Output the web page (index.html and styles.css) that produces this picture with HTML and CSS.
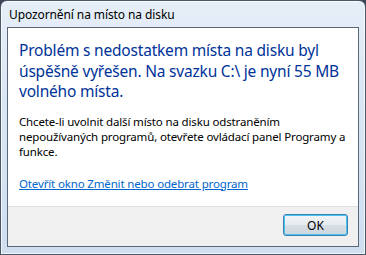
FILE: index.html
```html
<!DOCTYPE html>
<html>
	<head>
		<meta charset="utf-8">
		<link rel="stylesheet" href="styles.css">
	</head>
	<body>
		<div class="window">
			<div class="titlebar">Upozornění na místo na disku</div>
			<div class="client">
				<div class="content">
					<h1 class="instruction">Problém s nedostatkem místa na disku byl úspěšně vyřešen. Na svazku C:\ je nyní 55 MB volného místa.</h1>
					<p class="body-text">Chcete-li uvolnit další místo na disku odstraněním nepoužívaných programů, otevřete ovládací panel Programy a funkce.</p>
					<a class="link" href="#">Otevřít okno Změnit nebo odebrat program</a>
				</div>
				<div class="footer">
					<button class="ok">OK</button>
				</div>
			</div>
		</div>
	</body>
</html>
```
FILE: styles.css
```css
html, body {
	margin: 0;
	width: 366px;
	height: 255px;
	overflow: hidden;
	background: #3a4656;
	font-family: "Noto Sans", "Open Sans", sans-serif;
}

.window {
	box-sizing: border-box;
	width: 366px;
	height: 255px;
	border: 1px solid #4a5868;
	border-radius: 7px 7px 0 0;
	background: linear-gradient(to bottom, #e6eef8 0%, #d9e6f4 40%, #cfdff0 100%);
	padding: 0 6px 6px 6px;
	display: flex;
	flex-direction: column;
	box-shadow: inset 0 0 0 1px rgba(255, 255, 255, 0.7);
}

.titlebar {
	height: 26px;
	line-height: 28px;
	padding-left: 2px;
	font-size: 12px;
	color: #000;
	letter-spacing: -0.1px;
}

.client {
	flex: 1;
	border: 1px solid #5b6776;
	background: #fff;
	display: flex;
	flex-direction: column;
	margin-bottom: 1px;
}

.content {
	flex: 1;
	padding: 12px 10px 0 11px;
}

.instruction {
	margin: 0;
	font-weight: normal;
	font-size: 15.5px;
	line-height: 20.5px;
	color: #003399;
	letter-spacing: -0.2px;
}

.body-text {
	margin: 12px 0 12px 0;
	font-size: 11.5px;
	line-height: 15px;
	color: #000;
	letter-spacing: -0.15px;
}

.link {
	font-size: 11.5px;
	color: #0066cc;
	letter-spacing: -0.15px;
}

.footer {
	box-sizing: border-box;
	height: 40px;
	border-top: 1px solid #dfdfdf;
	background: #f0f0f0;
	display: flex;
	justify-content: flex-end;
	align-items: flex-start;
	padding: 7px 10px 0 0;
}

.ok {
	width: 65px;
	height: 22px;
	border: 1px solid #3c7fb1;
	border-radius: 3px;
	background: linear-gradient(to bottom, #f2f5f7 0%, #e6ebef 50%, #d8dfe5 50%, #cdd6dd 100%);
	box-shadow: inset 0 0 0 1px #48c4f0;
	font-family: "Noto Sans", "Open Sans", sans-serif;
	font-size: 12px;
	color: #000;
	padding: 0;
}
```
